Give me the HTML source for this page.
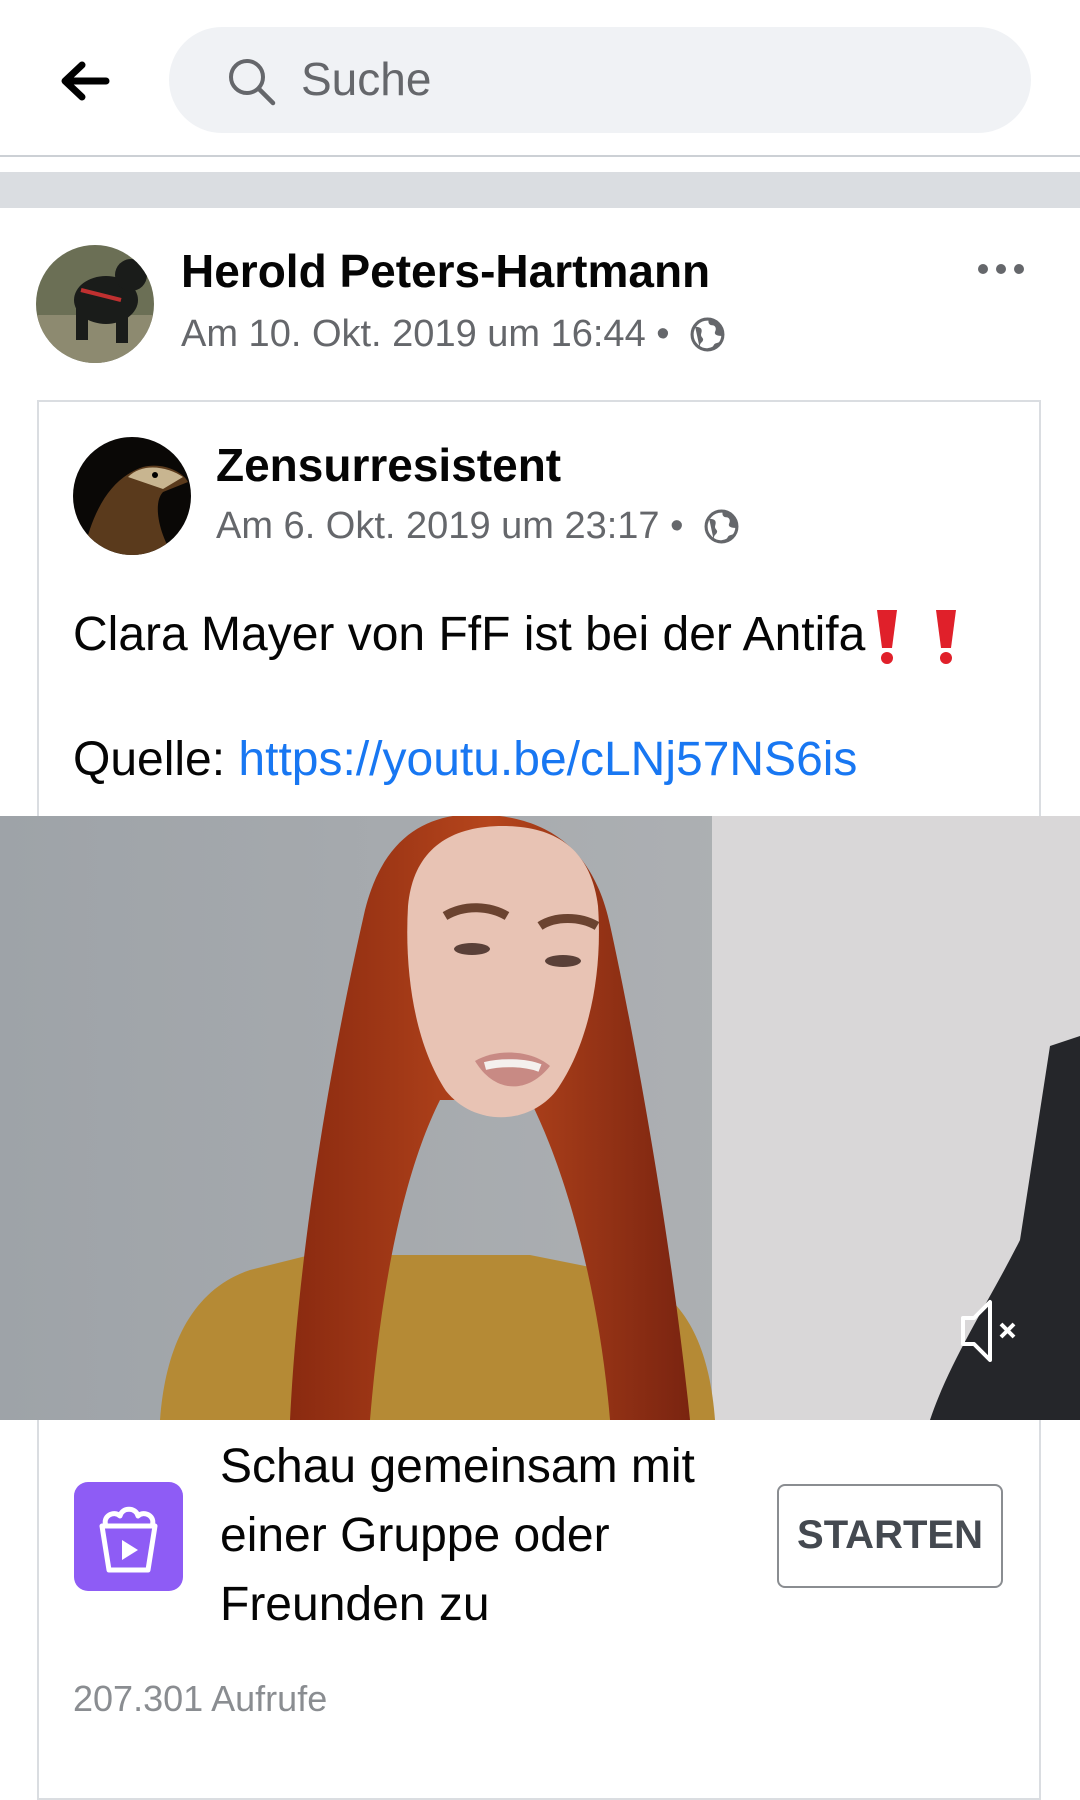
<!DOCTYPE html>
<html><head><meta charset="utf-8"><style>
body{margin:0;width:1080px;height:1740px;background:#fff;font-family:"Liberation Sans",sans-serif;position:relative;overflow:hidden}
.a{position:absolute;white-space:nowrap}
</style></head><body>
<svg class="a" style="left:58px;top:60px" width="52" height="42" viewBox="0 0 52 42"><path d="M48 21H8M24 5L7 21l17 16" fill="none" stroke="#000" stroke-width="7" stroke-linecap="round" stroke-linejoin="round"/></svg>
<div class="a" style="left:169px;top:27px;width:862px;height:106px;border-radius:53px;background:#f0f2f5"></div>
<svg class="a" style="left:226px;top:56px" width="52" height="52" viewBox="0 0 52 52"><circle cx="21" cy="21" r="16" fill="none" stroke="#65676b" stroke-width="4"/><path d="M33 33l14 14" stroke="#65676b" stroke-width="4.5" stroke-linecap="round"/></svg>
<div class="a" style="left:301px;top:52px;font-size:46px;color:#65676b">Suche</div>
<div class="a" style="left:0;top:155px;width:1080px;height:2px;background:#ccd0d5"></div>
<div class="a" style="left:0;top:172px;width:1080px;height:36px;background:#dadde1"></div>
<svg class="a" style="left:36px;top:245px" width="118" height="118"><defs><clipPath id="c1"><circle cx="59" cy="59" r="59"/></clipPath></defs><g clip-path="url(#c1)"><rect width="118" height="118" fill="#6b6f55"/><rect y="70" width="118" height="48" fill="#8d8a70"/><ellipse cx="70" cy="55" rx="32" ry="24" fill="#1a1c1a"/><rect x="40" y="55" width="12" height="40" fill="#1a1c1a"/><rect x="80" y="60" width="12" height="38" fill="#1a1c1a"/><circle cx="95" cy="30" r="16" fill="#1a1c1a"/><path d="M45 45l40 10" stroke="#c03030" stroke-width="4"/></g></svg>
<div class="a" style="left:181px;top:244px;font-size:46px;font-weight:bold;color:#050505">Herold Peters-Hartmann</div>
<div class="a" style="left:181px;top:313px;font-size:38px;color:#65676b">Am 10. Okt. 2019 um 16:44 •</div>
<svg class="a" style="left:689px;top:316px" width="37" height="37" viewBox="0 0 24 24"><circle cx="12" cy="12" r="10" fill="#fff" stroke="#65676b" stroke-width="2"/><path d="M4 7c3 0 5 1 4 4s2 3 1 5-2 1-2 5M13 2c-1 2 0 4 2 4s3 2 2 4 1 3 5 3v-3c0-4-3-8-9-8zM10 22c3-2 5-1 6-3s3-1 5-3c-1 4-5 7-11 6z" fill="#65676b"/></svg>
<div class="a" style="left:996px;top:264px;width:10px;height:10px;border-radius:5px;background:#65676b;box-shadow:-18px 0 #65676b,18px 0 #65676b"></div>
<div class="a" style="left:37px;top:400px;width:1004px;height:1400px;border:2px solid #dadde1;box-sizing:border-box"></div>
<svg class="a" style="left:73px;top:437px" width="118" height="118"><defs><clipPath id="c2"><circle cx="59" cy="59" r="59"/></clipPath></defs><g clip-path="url(#c2)"><rect width="118" height="118" fill="#0a0806"/><path d="M10 118C20 70 40 40 70 30c20-5 40 5 45 15L90 55c-10 10-5 40 10 63z" fill="#5a3a1c"/><path d="M55 40c15-15 40-10 55 0l-20 12z" fill="#c8b590"/><circle cx="82" cy="38" r="3" fill="#000"/></g></svg>
<div class="a" style="left:216px;top:438px;font-size:46px;font-weight:bold;color:#050505">Zensurresistent</div>
<div class="a" style="left:216px;top:505px;font-size:38px;color:#65676b">Am 6. Okt. 2019 um 23:17 •</div>
<svg class="a" style="left:703px;top:508px" width="37" height="37" viewBox="0 0 24 24"><circle cx="12" cy="12" r="10" fill="#fff" stroke="#65676b" stroke-width="2"/><path d="M4 7c3 0 5 1 4 4s2 3 1 5-2 1-2 5M13 2c-1 2 0 4 2 4s3 2 2 4 1 3 5 3v-3c0-4-3-8-9-8zM10 22c3-2 5-1 6-3s3-1 5-3c-1 4-5 7-11 6z" fill="#65676b"/></svg>
<div class="a" style="left:73px;top:607px;font-size:48px;color:#050505">Clara Mayer von FfF ist bei der Antifa</div>
<svg class="a" style="left:874px;top:608px" width="90" height="58" viewBox="0 0 90 58"><g fill="#e0202a"><path d="M3 2h20l-5 38h-10z"/><circle cx="13" cy="50" r="6"/><path d="M62 2h20l-5 38h-10z"/><circle cx="72" cy="50" r="6"/></g></svg>
<div class="a" style="left:73px;top:732px;font-size:48px;color:#050505">Quelle: <span style="color:#1877f2">https://youtu.be/cLNj57NS6is</span></div>
<svg class="a" style="left:0;top:816px" width="1080" height="604" viewBox="0 0 1080 604">
<defs><linearGradient id="w" x1="0" x2="1"><stop offset="0" stop-color="#9ea3a8"/><stop offset="1" stop-color="#b4b6b8"/></linearGradient>
<linearGradient id="h" x1="0" x2="1"><stop offset="0" stop-color="#8a2a10"/><stop offset=".5" stop-color="#b5451c"/><stop offset="1" stop-color="#7a2410"/></linearGradient></defs>
<rect width="1080" height="604" fill="url(#w)"/>
<rect x="712" width="368" height="604" fill="#d9d7d8"/>
<path d="M1050 230l30-10v384h-150c20-60 60-120 90-180z" fill="#25262a"/>
<path d="M160 604c5-70 30-130 90-150l60-15h220l100 20c60 20 80 80 85 145z" fill="#b58a35"/>
<path d="M290 604c10-200 50-400 75-510 20-80 70-100 125-95 65 5 105 40 120 110 20 90 60 300 80 495h-80c-10-120-40-240-80-320h-90c-40 80-60 200-70 320z" fill="url(#h)"/>
<path d="M408 90c5-55 40-80 95-80s88 25 95 80c5 70-10 140-42 185-28 35-82 35-110 0-30-45-42-115-38-185z" fill="#e8c3b4"/>
<path d="M445 100c20-12 45-10 62 0M540 110c15-10 40-10 57 0" stroke="#6b4330" stroke-width="9" fill="none"/>
<ellipse cx="472" cy="133" rx="18" ry="6" fill="#5a4038"/><ellipse cx="563" cy="145" rx="18" ry="6" fill="#5a4038"/>
<path d="M475 245c20-12 55-12 75 5-22 28-55 28-75-5z" fill="#c88a84"/><path d="M485 250c15-4 40-4 55 2" stroke="#f4f0ee" stroke-width="8"/>
<g fill="none" stroke="#fff" stroke-width="4" stroke-linejoin="round"><path d="M963 502h11l16-16v58l-16-16h-11z"/><path d="M1001 508l13 13M1014 508l-13 13"/></g>
</svg>
<div class="a" style="left:74px;top:1482px;width:109px;height:109px;border-radius:14px;background:#8e5cf5"></div>
<svg class="a" style="left:74px;top:1482px" width="109" height="109" viewBox="0 0 109 109"><g fill="none" stroke="#fff" stroke-width="5" stroke-linejoin="round"><path d="M28 44h53l-7 44H35z"/><path d="M32 44c-4-10 8-16 14-10 2-9 16-9 18 0 6-6 18 0 14 10"/></g><path d="M48 58v20l16-10z" fill="#fff"/></svg>
<div class="a" style="left:220px;top:1432px;font-size:48px;line-height:69px;color:#050505;white-space:normal;width:540px">Schau gemeinsam mit<br>einer Gruppe oder<br>Freunden zu</div>
<div class="a" style="left:777px;top:1484px;width:226px;height:104px;border:2.5px solid #8a8d91;border-radius:8px;box-sizing:border-box;font-size:40px;font-weight:bold;color:#444950;text-align:center;line-height:99px">STARTEN</div>
<div class="a" style="left:73px;top:1678px;font-size:36px;color:#8a8d91">207.301 Aufrufe</div>
</body></html>
